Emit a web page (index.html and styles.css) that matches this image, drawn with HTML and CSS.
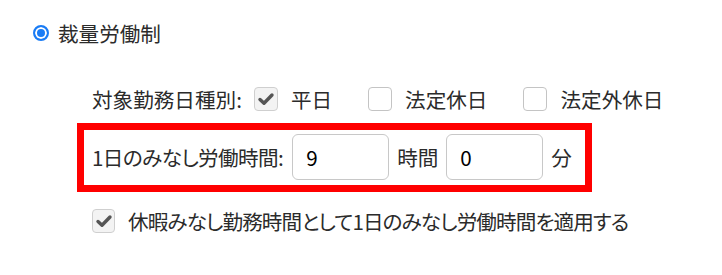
FILE: index.html
```html
<!DOCTYPE html>
<html lang="ja">
<head>
  <meta charset="UTF-8" />
  <meta name="viewport" content="width=device-width, initial-scale=1" />
  <title>裁量労働制</title>
  <link rel="stylesheet" href="styles.css">
</head>
<body>

  <div class="page">
    <label class="radio-row">
      <span class="radio"></span>
      <span>裁量労働制</span>
    </label>

    <div class="sub">
      <div class="days-row">
        <span class="days-label">対象勤務日種別:</span>
        <label class="check-item">
          <span class="check checked">
            <svg viewBox="0 0 24 24" width="24" height="24"><path d="M6 12.5l4 3.8 8-8.3" fill="none" stroke="#555" stroke-width="3.4" stroke-linecap="round" stroke-linejoin="round"/></svg>
          </span>
          <span>平日</span>
        </label>
        <label class="check-item">
          <span class="check"></span>
          <span>法定休日</span>
        </label>
        <label class="check-item">
          <span class="check"></span>
          <span>法定外休日</span>
        </label>
      </div>

      <!-- 1日のみなし労働時間 -->
      <div class="highlight">
        <span class="hours-label">1日のみなし労働時間:</span>
        <input class="num-input" type="text" value="9" />
        <span class="unit">時間</span>
        <input class="num-input" type="text" value="0" />
        <span class="unit">分</span>
      </div>

      <label class="apply-row">
        <span class="check checked">
          <svg viewBox="0 0 24 24" width="24" height="24"><path d="M6 12.5l4 3.8 8-8.3" fill="none" stroke="#555" stroke-width="3.4" stroke-linecap="round" stroke-linejoin="round"/></svg>
        </span>
        <span class="apply-text">休暇みなし勤務時間として1日のみなし労働時間を適用する</span>
      </label>
    </div>
  </div>

</body>
</html>
```

FILE: styles.css
```css
* {
  box-sizing: border-box;
}
body {
  margin: 0;
  background: #ffffff;
  font-family: "Noto Sans CJK JP", "Noto Sans", sans-serif;
  font-size: 20.6px;
  color: #2b2b2b;
  white-space: nowrap;
}
.page {
  padding: 25px 0 0 33px;
}
.radio-row {
  display: flex;
  align-items: center;
  gap: 9px;
  height: 16px;
}
.radio {
  width: 16px;
  height: 16px;
  border-radius: 50%;
  border: 2px solid #1a7cf5;
  background: #1a7cf5;
  box-shadow: inset 0 0 0 2px #ffffff;
}
.sub {
  margin-left: 44px;
}
.days-row {
  display: flex;
  align-items: center;
  height: 24px;
  margin-top: 46px;
  padding-left: 15px;
}
.days-label {
  margin-right: 12px;
}
.check-item {
  display: flex;
  align-items: center;
  gap: 13px;
  margin-right: 36px;
}
.check {
  display: block;
  width: 24px;
  height: 24px;
  border: 1px solid #c4c4c4;
  border-radius: 4px;
  background: #ffffff;
  flex: none;
}
.check.checked {
  background: #f3f3f3;
  border-color: #cfcfcf;
}
.check svg {
  display: block;
  margin: -1px;
}
.highlight {
  display: flex;
  align-items: center;
  width: 515px;
  margin-top: 12px;
  border: 7px solid #ff0000;
  padding: 4px 8px 5px;
}
.hours-label {
  font-feature-settings: "palt";
  letter-spacing: -0.6px;
  margin-right: 9px;
  flex: none;
}
.num-input {
  flex: none;
  width: 97px;
  height: 46px;
  border: 1px solid #c8c8c8;
  border-radius: 6px;
  padding: 0 13px;
  font-family: inherit;
  font-size: 20.6px;
  color: #000000;
  background: #ffffff;
  outline: none;
}
.unit {
  flex: none;
  margin: 0 8px;
}
.apply-row {
  display: flex;
  align-items: center;
  gap: 13px;
  height: 24px;
  margin-top: 17px;
  padding-left: 15px;
}
.apply-row .check {
  width: 23px;
  height: 24px;
}
.apply-text {
  font-feature-settings: "palt";
  letter-spacing: -0.9px;
}
```
